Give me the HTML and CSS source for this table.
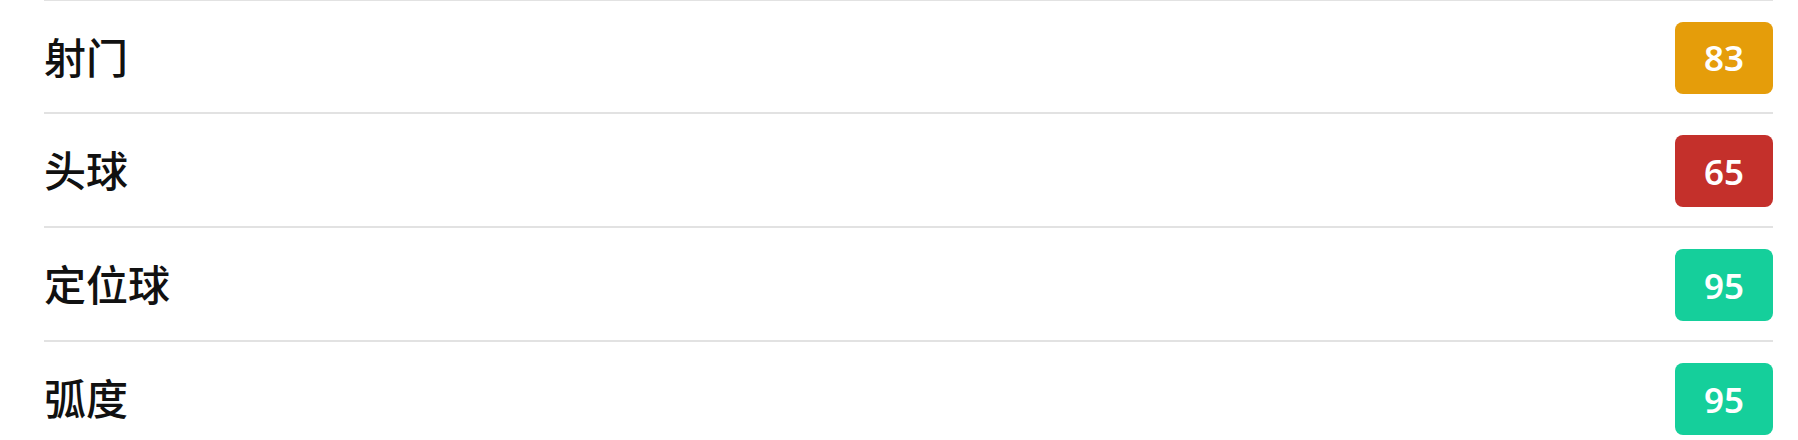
FILE: index.html
```html
<!DOCTYPE html>
<html lang="zh-CN">
<head>
<meta charset="utf-8">
<title>属性</title>
<link rel="stylesheet" href="styles.css">
</head>
<body>
<ul class="stats">
  <li class="row"><span class="label">射门</span><span class="badge badge-mid">83</span></li>
  <li class="row"><span class="label">头球</span><span class="badge badge-low">65</span></li>
  <li class="row"><span class="label">定位球</span><span class="badge badge-high">95</span></li>
  <li class="row"><span class="label">弧度</span><span class="badge badge-high">95</span></li>
</ul>
</body>
</html>
```
FILE: styles.css
```css
html, body {
  margin: 0;
  padding: 0;
  background: #ffffff;
}
body {
  width: 1798px;
  height: 440px;
  overflow: hidden;
}
.stats {
  list-style: none;
  margin: -1px 25px 0 44px;
  padding: 0;
}
.row {
  display: flex;
  align-items: center;
  justify-content: space-between;
  height: 112px;
  border-top: 2px solid #e2e2e2;
}
.row:first-child {
  height: 111px;
}
.label {
  font-family: "Noto Sans CJK SC", "Noto Sans", sans-serif;
  font-size: 42px;
  font-weight: 500;
  color: #111111;
  line-height: 1;
  padding-bottom: 2px;
}
.badge {
  display: flex;
  align-items: center;
  justify-content: center;
  width: 98px;
  height: 72px;
  border-radius: 8px;
  color: #ffffff;
  font-family: "Noto Sans", sans-serif;
  font-weight: 600;
  font-size: 35px;
  margin-top: 2px;
}
.badge-mid { background: #e59d0a; }
.badge-low { background: #c4302b; }
.badge-high { background: #15cf9b; }
```
